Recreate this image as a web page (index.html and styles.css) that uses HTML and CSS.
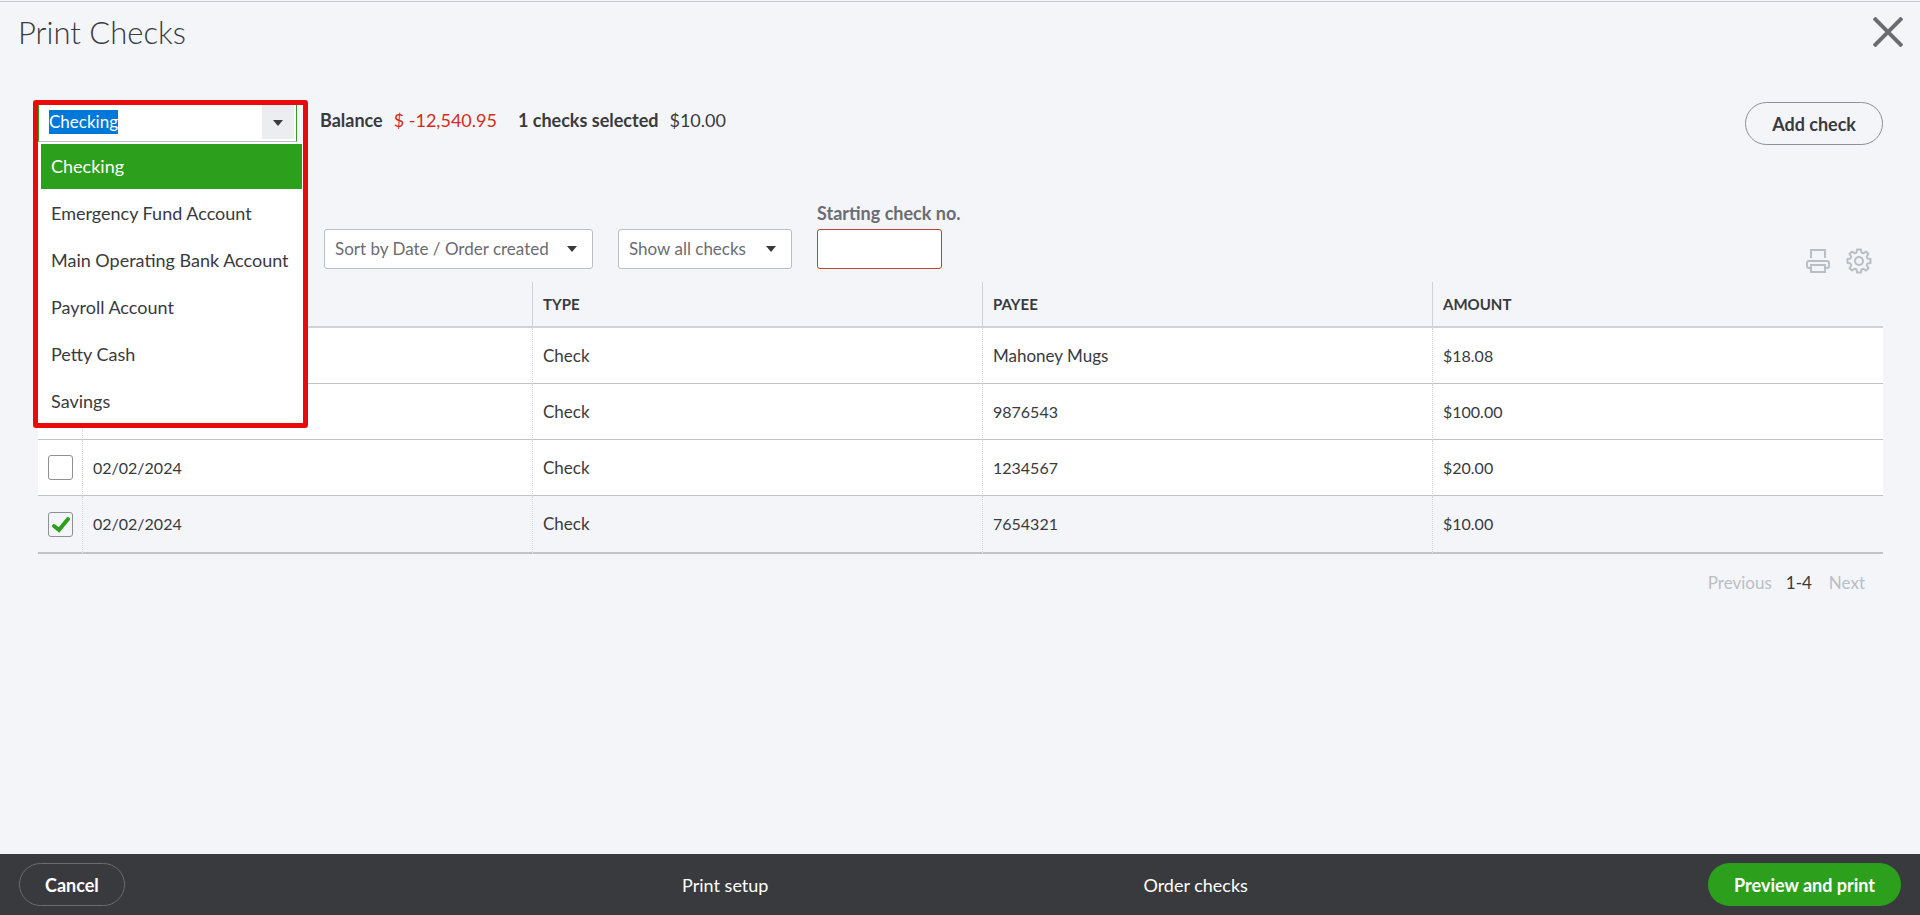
FILE: index.html
```html
<!DOCTYPE html>
<html lang="en">
<head>
<meta charset="utf-8">
<title>Print Checks</title>
<link rel="stylesheet" href="styles.css">
</head>
<body>
<div class="page">
  <header class="page-header">
    <h1 class="title">Print Checks</h1>
    <button class="close" type="button" aria-label="Close">
      <svg width="30" height="30" viewBox="0 0 30 30"><path d="M1 1L29 29M29 1L1 29" fill="none" stroke="#6b6c72" stroke-width="4"/></svg>
    </button>
  </header>

  <main class="content">
    <section class="summary">
      <div class="account">
        <div class="combo">
          <input class="combo-input" id="account" type="text" value="Checking" aria-label="Account" role="combobox" aria-expanded="true" aria-controls="account-list">
          <button class="combo-toggle" type="button" aria-label="Show accounts"><span class="caret"></span></button>
        </div>
        <ul class="account-list" id="account-list" role="listbox">
          <li class="account-option selected" role="option" aria-selected="true">Checking</li>
          <li class="account-option" role="option">Emergency Fund Account</li>
          <li class="account-option" role="option">Main Operating Bank Account</li>
          <li class="account-option" role="option">Payroll Account</li>
          <li class="account-option" role="option">Petty Cash</li>
          <li class="account-option" role="option">Savings</li>
        </ul>
        <div class="highlight"></div>
      </div>
      <p class="totals">
        <b>Balance</b><span class="negative">$ -12,540.95</span>
        <b class="count">1 checks selected</b><span>$10.00</span>
      </p>
      <button class="pill add" type="button">Add check</button>
    </section>

    <section class="filters">
      <div class="select sort">
        <select aria-label="Sort order"><option>Sort by Date / Order created</option></select>
        <span class="caret"></span>
      </div>
      <div class="select show">
        <select aria-label="Check filter"><option>Show all checks</option></select>
        <span class="caret"></span>
      </div>
      <div class="field">
        <label for="start-no">Starting check no.</label>
        <input id="start-no" type="text">
      </div>
      <div class="tools">
        <button type="button" aria-label="Print list">
          <svg width="26" height="26" viewBox="0 0 26 26" fill="none" stroke="#babec5" stroke-width="2"><path d="M6 10V2H20V10M6 20H4Q2 20 2 18V15Q2 13 4 13H22Q24 13 24 15V18Q24 20 22 20H20M6 17H20V24H6Z"/></svg>
        </button>
        <button type="button" aria-label="Settings">
          <svg width="26" height="26" viewBox="0 0 26 26" fill="none" stroke="#babec5" stroke-width="2" stroke-linejoin="round"><circle cx="13" cy="13" r="4"/><path d="M11 1.500H15L15.500 4.500L17.500 5.300L20 3.500L22.500 6L20.700 8.500L21.500 10.500L24.500 11V15L21.500 15.500L20.700 17.500L22.500 20L20 22.500L17.500 20.700L15.500 21.500L15 24.500H11L10.500 21.500L8.500 20.700L6 22.500L3.500 20L5.300 17.500L4.500 15.500L1.500 15V11L4.500 10.500L5.300 8.500L3.500 6L6 3.500L8.500 5.300L10.500 4.500Z"/></svg>
        </button>
      </div>
    </section>

    <table class="checks">
      <colgroup><col class="col-check"><col><col><col><col></colgroup>
      <thead>
        <tr><th><input class="tick" type="checkbox" aria-label="Select all"></th><th></th><th>TYPE</th><th>PAYEE</th><th>AMOUNT</th></tr>
      </thead>
      <tbody>
        <tr><td><input class="tick" type="checkbox" aria-label="Select Mahoney Mugs"></td><td></td><td>Check</td><td>Mahoney Mugs</td><td class="num">$18.08</td></tr>
        <tr><td><input class="tick" type="checkbox" aria-label="Select 9876543"></td><td></td><td>Check</td><td class="num">9876543</td><td class="num">$100.00</td></tr>
        <tr><td><input class="tick" type="checkbox" aria-label="Select 1234567"></td><td class="num">02/02/2024</td><td>Check</td><td class="num">1234567</td><td class="num">$20.00</td></tr>
        <tr class="checked"><td><span class="tick-wrap"><input class="tick" type="checkbox" aria-label="Select 7654321" checked><svg class="mark" width="20" height="18" viewBox="0 0 20 18"><path d="M3 10L8 14L17 3" fill="none" stroke="#2ca01c" stroke-width="4" stroke-linecap="round"/></svg></span></td><td class="num">02/02/2024</td><td>Check</td><td class="num">7654321</td><td class="num">$10.00</td></tr>
      </tbody>
    </table>

    <nav class="pager" aria-label="Pages">
      <button type="button" disabled>Previous</button>
      <span>1-4</span>
      <button type="button" disabled>Next</button>
    </nav>
  </main>

  <footer class="footer">
    <button class="pill cancel" type="button">Cancel</button>
    <div class="footer-links"><a href="#">Print setup</a><a href="#">Order checks</a></div>
    <button class="pill primary" type="button">Preview and print</button>
  </footer>
</div>
<script src="script.js"></script>
</body>
</html>
```

FILE: styles.css
```css
* { box-sizing: border-box; }

body {
  margin: 0;
  background: #f4f5f9;
  color: #393a3d;
  font: 17px/24px Lato, "Liberation Sans", sans-serif;
}

button, input, select { font: inherit; color: inherit; }
button { padding: 0; border: 0; background: none; }

.page {
  display: flex;
  flex-direction: column;
  min-height: 100vh;
  padding-top: 1px;
}

.page-header {
  display: flex;
  justify-content: space-between;
  align-items: center;
  height: 61px;
  padding: 0 17px 0 18px;
  border-top: 1px solid #c7cad0;
}
.title { margin: 0; font-size: 31px; line-height: 40px; font-weight: 300; }
.close { height: 30px; }
.close svg, .tools svg { display: block; }

.content { flex: 1; padding: 40px 37px 0 38px; }

.summary { display: flex; align-items: flex-start; height: 99px; }

.account { position: relative; width: 259px; height: 40px; }
.combo {
  display: flex;
  height: 40px;
  border: 1px solid #2ca01c;
  border-bottom-color: #babec5;
  background: #fff;
}
.combo-input {
  flex: 1;
  min-width: 0;
  padding: 0 10px;
  border: 0;
  outline: 0;
  background: none;
}
.combo-input::selection { background: #0078d7; color: #fff; }
.combo-toggle { width: 32px; margin: 0 2px 2px 0; background: #ebedf0; }
.caret {
  display: inline-block;
  border: solid transparent;
  border-width: 6px 5px 0;
  border-top-color: #393a3d;
}
.combo-toggle .caret { vertical-align: middle; }

.account-list {
  position: absolute;
  z-index: 1;
  top: 40px;
  left: 0;
  display: grid;
  gap: 2px;
  width: 266px;
  margin: 0;
  padding: 2px 2px 2px 3px;
  list-style: none;
  background: #fff;
}
.account-option { padding: 0 10px; font-size: 18px; line-height: 45px; white-space: nowrap; }
.account-option.selected { background: #2ca01c; color: #fff; }

.highlight {
  position: absolute;
  z-index: 2;
  top: -2px;
  left: -5px;
  width: 275px;
  height: 328px;
  border: 5px solid #e90b0b;
  border-radius: 3px;
}

.totals { display: flex; gap: 11px; margin: 6px auto 0 23px; font-size: 18px; }
.negative { color: #d52b1e; }
.count { margin-left: 10px; }

.pill { height: 43px; border-radius: 22px; padding: 0 26px; font-weight: 700; font-size: 18px; }
.add { border: 1px solid #8d9096; }

.filters { display: flex; align-items: flex-end; gap: 25px; margin-bottom: 13px; padding: 0 11px 0 286px; }
.select { position: relative; }
.select select {
  width: 100%;
  height: 40px;
  padding: 0 10px;
  appearance: none;
  border: 1px solid #babec5;
  border-radius: 3px;
  background: #fff;
  color: #6b6c72;
}
.select .caret { position: absolute; top: 17px; right: 16px; }
.sort { width: 269px; }
.show { width: 174px; }
.field { display: grid; gap: 4px; width: 125px; }
.field label { font-size: 18px; font-weight: 700; color: #6b6c72; white-space: nowrap; }
.field input {
  width: 125px;
  height: 40px;
  border: 1px solid #b8452f;
  border-radius: 3px;
  background: #fff;
}
.tools { display: flex; gap: 15px; margin-left: auto; margin-bottom: -5px; }

.checks { width: 100%; table-layout: fixed; border-collapse: separate; border-spacing: 0; }
.col-check { width: 45px; }
.checks th {
  height: 46px;
  padding: 0 10px;
  border-bottom: 2px solid #d0d2d8;
  border-right: 1px solid #d0d2d8;
  font-size: 15px;
  text-align: left;
}
.checks td {
  height: 56px;
  padding: 0 10px;
  border-bottom: 1px solid #c1c3c7;
  border-right: 1px dotted #d4d7dc;
  background: #fff;
}
.checks .num { font-size: 16px; }
.checks th:last-child, .checks td:last-child { border-right: 0; }
.checks tr:last-child td { height: 58px; border-bottom: 2px solid #c1c3c7; }
.checks .checked td { background: #f4f5f9; }

.tick {
  display: block;
  width: 25px;
  height: 25px;
  margin: 0;
  appearance: none;
  border: 1px solid #8d9096;
  border-radius: 3px;
}
.tick-wrap { position: relative; display: block; }
.mark { position: absolute; top: 4px; left: 3px; }

.pager { display: flex; justify-content: flex-end; gap: 14px; margin-top: 17px; padding-right: 18px; }
.pager button { color: #babec5; }
.pager span { margin-right: 3px; }

.footer {
  display: grid;
  grid-template-columns: 1fr auto 1fr;
  align-items: center;
  height: 61px;
  padding: 0 19px;
  background: #393a3d;
  color: #fff;
}
.footer-links { display: flex; gap: 375px; padding-left: 10px; font-size: 18px; }
.footer a { color: inherit; text-decoration: none; }
.cancel { justify-self: start; padding: 0 25px; border: 1px solid #6b6c72; }
.primary { justify-self: end; background: #2ca01c; }
```

FILE: script.js
```js
const account = document.getElementById("account");
account.focus();
account.select();
```
